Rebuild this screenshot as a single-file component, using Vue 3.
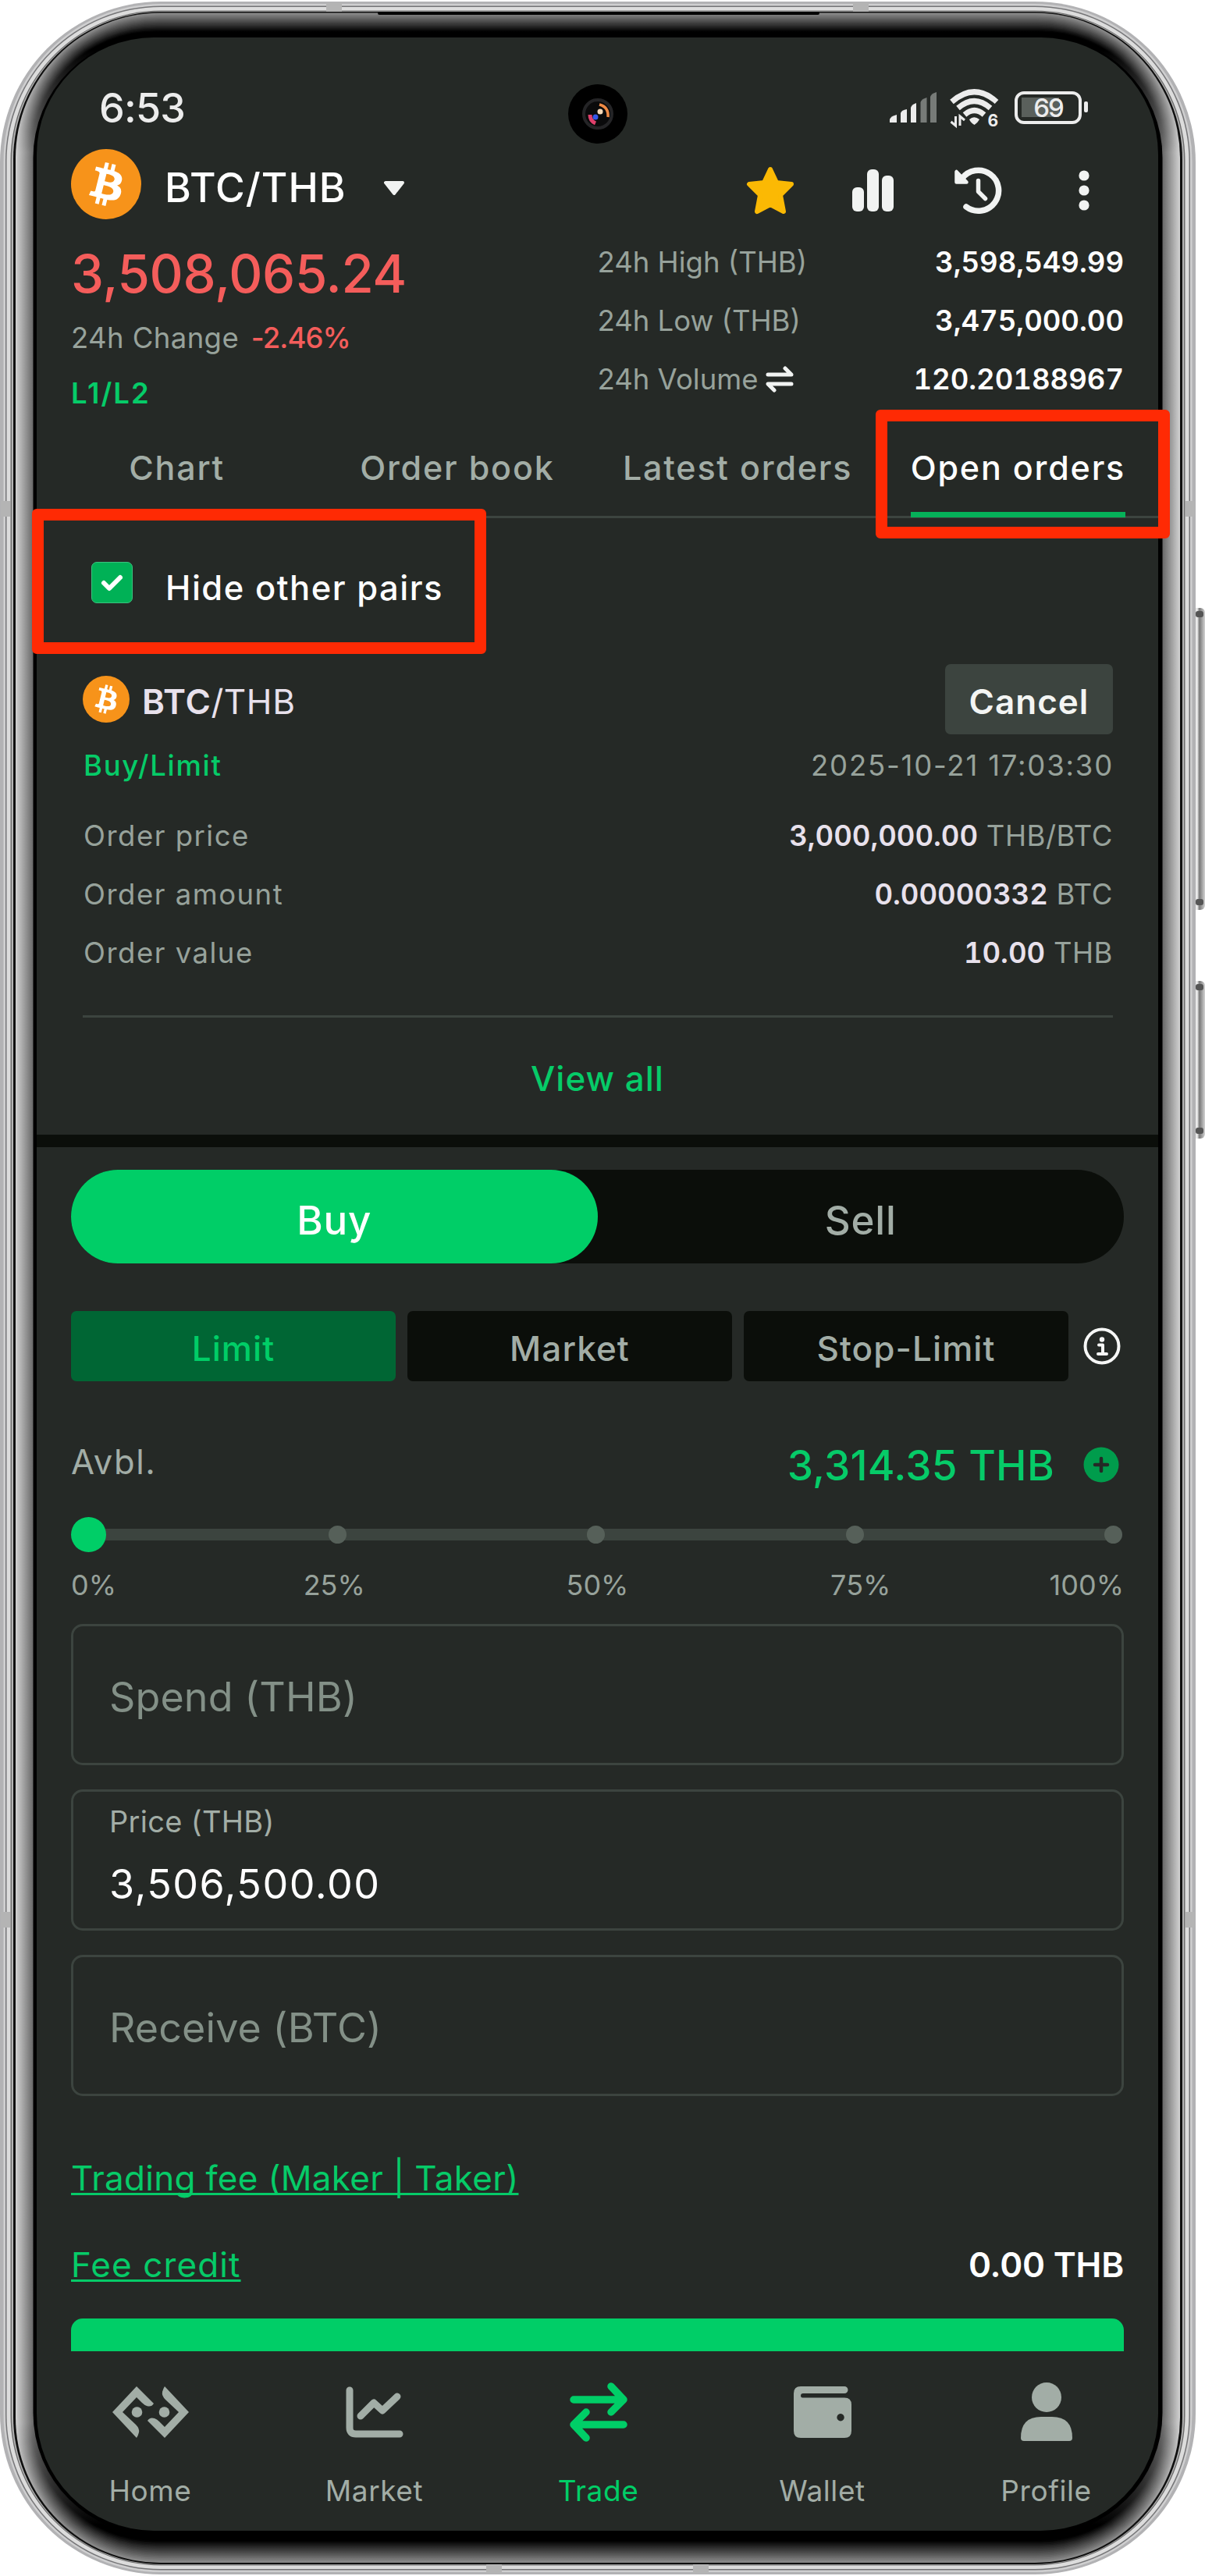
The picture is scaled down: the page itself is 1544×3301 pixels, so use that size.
<template>
    <div class="phone">
        <!-- metal frame, glass edge and side keys -->
        <svg class="frame" width="1544" height="3301" viewBox="0 0 1544 3301">
            <defs>
                <linearGradient v-for="r in glass" :id="r.id" :key="r.id" gradientUnits="userSpaceOnUse" x1="0" y1="16" x2="0" y2="3284">
                    <stop offset="0" :stop-color="r.end" />
                    <stop offset="0.015" :stop-color="r.end" />
                    <stop offset="0.055" :stop-color="r.side" />
                    <stop offset="0.945" :stop-color="r.side" />
                    <stop offset="0.985" :stop-color="r.end" />
                    <stop offset="1" :stop-color="r.end" />
                </linearGradient>
                <linearGradient id="key" x1="0" y1="0" x2="1" y2="0">
                    <stop offset="0" stop-color="#d6d6d6" />
                    <stop offset="0.45" stop-color="#ececec" />
                    <stop offset="0.6" stop-color="#777" />
                    <stop offset="1" stop-color="#d2d2d2" />
                </linearGradient>
            </defs>
            <g v-for="k in keys" :key="k.y">
                <rect x="1526" :y="k.y" width="18" :height="k.h" rx="6" fill="url(#key)" />
                <rect x="1532" :y="k.y + 4" width="10" height="8" rx="3" fill="#555" />
                <rect x="1532" :y="k.y + k.h - 14" width="10" height="8" rx="3" fill="#555" />
            </g>
            <rect
                v-for="m in metal" :key="m.x"
                :x="m.x" :y="m.y" :width="1532 - m.x * 2" :height="3301 - m.y * 2" :rx="206 - m.x" :fill="m.fill"
            />
            <rect
                v-for="r in glass" :key="'g' + r.id"
                :x="r.x" :y="r.top" :width="1532 - r.x * 2" :height="r.bottom - r.top" :rx="r.radius" :fill="`url(#${r.id})`"
            />
            <rect x="42.5" y="46" width="1447" height="3202" rx="156" fill="#000" />
            <rect x="484" y="15" width="566" height="4" rx="2" fill="#050505" />
            <g fill="#b4b4b4">
                <rect x="418" y="3" width="20" height="12" />
                <rect x="1093" y="3" width="20" height="12" />
                <rect x="623" y="3286" width="20" height="12" />
                <rect x="888" y="3286" width="20" height="12" />
                <rect x="1" y="642" width="12" height="20" />
                <rect x="1519" y="642" width="12" height="20" />
                <rect x="1" y="2450" width="12" height="20" />
                <rect x="1519" y="2450" width="12" height="20" />
            </g>
        </svg>

        <div class="screen">
            <div class="status">
                <span class="time">6:53</span>
                <div class="status-icons">
                    <svg width="144" height="64" viewBox="1140 106 144 64">
                        <g fill="#ececec">
                            <path d="M1140 157v-4q1-4 9-6v10z" />
                            <path d="M1154 157v-12q1-4 8-5v17z" />
                            <path d="M1167 157v-19q1-4 7-6v25z" />
                        </g>
                        <g fill="#777b78">
                            <path d="M1179.500 157v-26q1-4 8-6v32z" />
                            <path d="M1192 157v-33q1-4 8-6v39z" />
                        </g>
                        <g fill="none" stroke="#ececec" stroke-width="7">
                            <path d="M1219.500 130.500Q1248.500 105 1277 130.500" />
                            <path d="M1227.500 138.500Q1248.500 120.500 1269 138.500" />
                            <path d="M1236 147Q1248.500 136 1261 147" />
                        </g>
                        <path d="M1242 153q6-5.500 13 0q-2 4-6.500 7q-5-3-6.500-7z" fill="#ececec" />
                        <path d="M1224.500 149v12l-6-5M1230 161v-12l6 5" fill="none" stroke="#ececec" stroke-width="3" />
                        <text x="1265.500" y="161.500" class="wifi-gen">6</text>
                    </svg>
                    <div class="battery"><span>69</span></div>
                </div>
            </div>

            <header class="head">
                <svg class="coin" width="90" height="90" viewBox="0 0 32 32">
                    <circle cx="16" cy="16" r="16" fill="#f7931a" />
                    <path :d="btc" fill="#fff" />
                </svg>
                <h1>BTC/THB</h1>
                <svg class="caret" width="28" height="18" viewBox="0 0 28 18">
                    <path d="M3 2h22L14 16z" fill="#f1f3f2" stroke="#f1f3f2" stroke-width="4" stroke-linejoin="round" />
                </svg>
                <div class="actions">
                    <svg width="62" height="62" viewBox="0 0 62 62">
                        <path d="M31 4L39 21L58 23L44 37L48 58L31 49L14 58L18 37L4 23L23 21Z" fill="#fbb904" stroke="#fbb904" stroke-width="6" stroke-linejoin="round" />
                    </svg>
                    <svg width="53" height="54" viewBox="0 0 53 54" fill="#f1f3f2">
                        <rect y="23" width="15" height="31" rx="6" />
                        <rect x="19" width="15" height="54" rx="6" />
                        <rect x="38" y="8" width="15" height="46" rx="6" />
                    </svg>
                    <svg width="62" height="62" viewBox="0 0 62 62" fill="none" stroke="#f1f3f2" stroke-linecap="round">
                        <path d="M9.500 16A26 26 0 1 1 15 52" stroke-width="7.500" />
                        <path d="M2.500 7v13.500h13z" fill="#f1f3f2" stroke-width="4.500" stroke-linejoin="round" />
                        <path d="M30.500 18.500v14l9 9" stroke-width="5.500" stroke-linejoin="round" />
                    </svg>
                    <svg width="14" height="52" viewBox="0 0 14 52" fill="#f1f3f2">
                        <circle cx="7" cy="7" r="6.600" />
                        <circle cx="7" cy="26" r="6.600" />
                        <circle cx="7" cy="45" r="6.600" />
                    </svg>
                </div>
            </header>

            <section class="quote">
                <div>
                    <div class="last">3,508,065.24</div>
                    <div class="change">24h Change <b>-2.46%</b></div>
                    <div class="level">L1/L2</div>
                </div>
                <dl class="stats">
                    <div v-for="s in stats" :key="s.label">
                        <dt>
                            {{ s.label }}
                            <svg v-if="s.swap" width="36" height="34" viewBox="0 0 36 34" fill="none" stroke="#f1f3f2" stroke-width="5" stroke-linecap="round" stroke-linejoin="round">
                                <path d="M3 11h30l-8-8M33 23H3l8 8" />
                            </svg>
                        </dt>
                        <dd>{{ s.value }}</dd>
                    </div>
                </dl>
            </section>

            <nav class="tabs">
                <a v-for="t in tabs" :key="t" :class="{ active: t === tab }" @click="tab = t"><span>{{ t }}</span></a>
            </nav>

            <label class="hide-pairs" @click="hideOthers = !hideOthers">
                <span class="check">
                    <svg v-if="hideOthers" width="32" height="24" viewBox="0 0 32 24">
                        <path d="M5 12l7 7L26 5" fill="none" stroke="#fff" stroke-width="6" stroke-linecap="round" stroke-linejoin="round" />
                    </svg>
                </span>
                <span class="hide-text">Hide other pairs</span>
            </label>

            <section class="order">
                <div class="order-head">
                    <svg width="60" height="60" viewBox="0 0 32 32">
                        <circle cx="16" cy="16" r="16" fill="#f7931a" />
                        <path :d="btc" fill="#fff" />
                    </svg>
                    <span class="pair"><b>BTC</b>/THB</span>
                    <button class="cancel">Cancel</button>
                </div>
                <div class="order-type">
                    <span class="side">Buy/Limit</span>
                    <span class="date">2025-10-21 17:03:30</span>
                </div>
                <div class="order-rows">
                    <div v-for="r in rows" :key="r.label">
                        <span class="key">{{ r.label }}</span>
                        <span class="val"><b>{{ r.value }}</b> {{ r.unit }}</span>
                    </div>
                </div>
            </section>
            <a class="view-all">View all</a>

            <section class="trade">
                <div class="sides">
                    <button class="buy">Buy</button>
                    <button>Sell</button>
                </div>
                <div class="types">
                    <button v-for="t in types" :key="t" :class="{ active: t === type }" @click="type = t">{{ t }}</button>
                    <svg width="48" height="48" viewBox="0 0 48 48" fill="none" stroke="#f6f7f6">
                        <circle cx="24" cy="24" r="21.500" stroke-width="4" />
                        <circle cx="24" cy="15.500" r="3.200" fill="#f6f7f6" stroke="none" />
                        <path d="M20 22.500h5v11M19 34h11" stroke-width="4" stroke-linecap="round" stroke-linejoin="round" />
                    </svg>
                </div>
                <div class="avbl">
                    <span class="avbl-label">Avbl.</span>
                    <span class="funds">3,314.35 THB</span>
                    <svg width="46" height="46" viewBox="0 0 46 46">
                        <circle cx="23" cy="23" r="22.500" fill="#009c4c" />
                        <path d="M23 15v16M15 23h16" stroke="#252926" stroke-width="4.500" stroke-linecap="round" />
                    </svg>
                </div>
                <div class="slider">
                    <i class="thumb"></i>
                    <i class="dot" v-for="n in 4" :key="n"></i>
                </div>
                <div class="ticks">
                    <span v-for="p in ['0%', '25%', '50%', '75%', '100%']" :key="p">{{ p }}</span>
                </div>
                <div class="field">Spend (THB)</div>
                <div class="field filled">
                    <small>Price (THB)</small>
                    <span>3,506,500.00</span>
                </div>
                <div class="field">Receive (BTC)</div>
                <div class="fee first"><a>Trading fee (Maker | Taker)</a></div>
                <div class="fee"><a>Fee credit</a><b>0.00 THB</b></div>
                <div class="submit"></div>
            </section>

            <nav class="bottom">
                <a>
                    <svg width="98" height="66" viewBox="0 0 98 66" fill="#a2ada6">
                        <path :d="hook" />
                        <path :d="hook" transform="rotate(180 49 33)" />
                        <circle cx="31.500" cy="33" r="6.800" />
                        <circle cx="66.500" cy="33" r="6.800" />
                    </svg>
                    <span>Home</span>
                </a>
                <a>
                    <svg width="74" height="66" viewBox="0 0 74 66" fill="none" stroke="#a2ada6" stroke-width="9" stroke-linecap="round" stroke-linejoin="round">
                        <path d="M5 5v48q0 8 8 8h56" />
                        <path d="M19 38l17-17 11 10 19-18" />
                    </svg>
                    <span>Market</span>
                </a>
                <a class="active">
                    <svg width="74" height="76" viewBox="0 0 74 76" fill="none" stroke="#00ce67" stroke-width="9.500" stroke-linecap="round" stroke-linejoin="round">
                        <path d="M5 22h63M53 5l16 17-16 16" />
                        <path d="M69 54H6M21 38L5 54l16 17" />
                    </svg>
                    <span>Trade</span>
                </a>
                <a>
                    <svg width="74" height="66" viewBox="0 0 74 66" fill="#a2ada6">
                        <path fill-rule="evenodd" d="M9 0h56a4.500 4.500 0 0 1 0 9H12q-3 0-3 3t3 2.500h53q9 0 9 9V57q0 9-9 9H9q-9 0-9-9V9q0-9 9-9zM60 35a4.700 4.700 0 1 0 .1 0z" />
                    </svg>
                    <span>Wallet</span>
                </a>
                <a>
                    <svg width="66" height="76" viewBox="0 0 66 76" fill="#a2ada6">
                        <circle cx="33" cy="19" r="19" />
                        <path d="M0 71q0-27 26-27h14q26 0 26 27 0 4-4 4H4q-4 0-4-4z" />
                    </svg>
                    <span>Profile</span>
                </a>
            </nav>
        </div>

        <!-- front camera -->
        <svg class="camera" width="76" height="76" viewBox="0 0 76 76">
            <circle cx="38" cy="38" r="38" fill="#000" />
            <circle cx="38" cy="38" r="18" fill="#0a0a0b" stroke="#242426" stroke-width="4" />
            <path d="M40 26q12 3 11 16" fill="none" stroke="#ef8a45" stroke-width="3.500" />
            <path d="M28 39q0 8 7 11" fill="none" stroke="#e0406c" stroke-width="5" />
            <circle cx="35" cy="42" r="3.500" fill="#3557e8" />
            <circle cx="41" cy="35" r="3.500" fill="#f6d8b8" />
        </svg>

        <div class="mark mark-tab"></div>
        <div class="mark mark-hide"></div>
    </div>
</template>

<script setup>
    import { ref } from 'vue'

    const tabs = ['Chart', 'Order book', 'Latest orders', 'Open orders']
    const tab = ref('Open orders')
    const hideOthers = ref(true)

    const types = ['Limit', 'Market', 'Stop-Limit']
    const type = ref('Limit')

    const stats = [
        { label: '24h High (THB)', value: '3,598,549.99' },
        { label: '24h Low (THB)', value: '3,475,000.00' },
        { label: '24h Volume', value: '120.20188967', swap: true }
    ]

    const rows = [
        { label: 'Order price', value: '3,000,000.00', unit: 'THB/BTC' },
        { label: 'Order amount', value: '0.00000332', unit: 'BTC' },
        { label: 'Order value', value: '10.00', unit: 'THB' }
    ]

    /* ------- ICON SHAPES USED MORE THAN ONCE --------------------------*/

    const btc = 'M23.189 14.02c.314-2.096-1.283-3.223-3.465-3.975l.708-2.84-1.728-.43-.69 2.765c-.454-.114-.92-.22-1.385-.326l.695-2.783L15.596 6l-.708 2.839c-.376-.086-.746-.17-1.104-.26l.002-.009-2.384-.595-.46 1.846s1.283.294 1.256.312c.7.175.826.638.805 1.006l-.806 3.235c.048.012.11.03.18.057l-.183-.045-1.13 4.532c-.086.212-.303.531-.793.41.018.025-1.256-.313-1.256-.313l-.858 1.978 2.25.561c.418.105.828.215 1.231.318l-.715 2.872 1.727.43.708-2.84c.472.127.93.245 1.378.357l-.706 2.828 1.728.43.715-2.866c2.948.558 5.164.333 6.097-2.333.752-2.146-.037-3.385-1.588-4.192 1.13-.26 1.98-1.003 2.207-2.538zm-3.95 5.538c-.533 2.147-4.148.986-5.32.695l.95-3.805c1.172.293 4.929.872 4.37 3.11zm.535-5.569c-.487 1.953-3.495.96-4.47.717l.86-3.45c.975.243 4.118.696 3.61 2.733z'
    const hook = 'M31 0L53 22Q50 27 44 25Q41 24 38 21L31 14L13 33L30 49Q35 54 34 59Q33 63 31 66L0 33Z'

    /* ------- PHONE BODY -----------------------------------------------*/

    const keys = [{ y: 779, h: 387 }, { y: 1257, h: 202 }]

    const metal = [
        { x: 0, y: 2, fill: '#b2b2b4' },
        { x: 4.5, y: 5, fill: '#cfcfd0' },
        { x: 7, y: 7.5, fill: '#757577' },
        { x: 8.5, y: 9, fill: '#dcdcdc' },
        { x: 13.5, y: 13.5, fill: '#6c6c6c' },
        { x: 15, y: 14.5, fill: '#b5b5b5' },
        { x: 17, y: 15, fill: '#101010' }
    ]

    function grey(from, to, t) {
        const v = Math.round(from + (to - from) * t)
        return `rgb(${v}, ${v}, ${v})`
    }

    // the glass edge fades from its rim towards the display
    const glass = Array.from({ length: 24 }, (_, i) => {
        const t = i / 23
        return {
            id: 'ring' + i,
            x: 20 + 22 * t,
            top: 16.5 + 29 * t,
            bottom: 3284 - 34 * t,
            radius: 186 - 30 * t,
            side: grey(208, 104, t),
            end: grey(138, 0, Math.min(1, t * 1.25))
        }
    })
</script>

<style>
body {
    margin: 0;
    background: #fff;
}
</style>

<style scoped>
.phone {
    position: relative;
    width: 1544px;
    height: 3301px;
    overflow: hidden;
    padding: 48px 60px 0 47px;
    box-sizing: border-box;
    font-family: Inter, "Liberation Sans", sans-serif;
    color: #fff;
}

.frame {
    position: absolute;
    left: 0;
    top: 0;
}

.camera {
    position: absolute;
    left: 728px;
    top: 108px;
}

.screen {
    position: relative;
    display: flex;
    flex-direction: column;
    width: 1437px;
    height: 3195px;
    border-radius: 150px;
    background: #252926;
    overflow: hidden;
}

button {
    border: 0;
    font: inherit;
    color: inherit;
    background: none;
    letter-spacing: inherit;
}

b {
    font-weight: 600;
}

/* STATUS BAR */

.status {
    display: flex;
    justify-content: space-between;
    align-items: center;
    height: 143px;
    padding: 37px 90px 0 80px;
    box-sizing: border-box;
    color: #ececec;
}

.time {
    font-size: 52px;
    font-weight: 500;
    letter-spacing: -0.8px;
}

.status-icons {
    display: flex;
    align-items: center;
    gap: 16px;
}

.wifi-gen {
    font-size: 21px;
    font-weight: 700;
    fill: #ececec;
}

.battery {
    position: relative;
    width: 86px;
    height: 42px;
    margin-right: 8px;
    box-sizing: border-box;
    border: 4.5px solid #ececec;
    border-radius: 12px;
    font-size: 33px;
    font-weight: 500;
    line-height: 34px;
    text-align: center;
    letter-spacing: -2px;
    background: linear-gradient(#5a605c, #5a605c) 5px 4px / 48px 25px no-repeat;
}

.battery::after {
    content: "";
    position: absolute;
    right: -12px;
    top: 9px;
    width: 5px;
    height: 14px;
    border-radius: 2px;
    background: #ececec;
}

/* HEADER */

.head {
    display: flex;
    align-items: center;
    height: 90px;
    padding: 0 88px 0 44px;
}

h1 {
    margin: 0 0 0 30px;
    padding-top: 8px;
    font-size: 51.5px;
    font-weight: 500;
    line-height: 82px;
    letter-spacing: 1px;
}

.caret {
    margin: 9px 0 0 47px;
}

.actions {
    display: flex;
    align-items: center;
    margin: 15px 0 0 auto;
}

.actions svg:nth-child(2) {
    margin: 0 78px 0 74px;
}

.actions svg:nth-child(4) {
    margin-left: 97px;
}

.quote {
    display: flex;
    justify-content: space-between;
    height: 259px;
    padding: 0 44px;
    font-size: 36.5px;
    box-sizing: border-box;
}

.last {
    margin-top: 30px;
    font-size: 67px;
    font-weight: 500;
    line-height: 80px;
    letter-spacing: -0.3px;
    color: #f45d5b;
}

.change {
    margin-top: 12px;
    line-height: 60px;
    letter-spacing: 0.4px;
    color: #97a29b;
}

.change b {
    margin-left: 5px;
    font-weight: 500;
    letter-spacing: -0.9px;
    color: #f45d5b;
}

.level {
    margin-top: 11px;
    font-weight: 600;
    line-height: 60px;
    letter-spacing: 2px;
    color: #06cb68;
}

.stats {
    width: 674.5px;
    margin: 17.5px 0 0;
    line-height: 75px;
}

.stats > div {
    display: flex;
    justify-content: space-between;
}

.stats dt {
    display: flex;
    align-items: center;
    gap: 9px;
    color: #97a29b;
}

.stats dd {
    margin: 0;
    font-weight: 600;
    font-variant-numeric: tabular-nums;
}

/* TABS */

.tabs {
    display: flex;
    height: 123.5px;
    box-sizing: border-box;
    border-bottom: 3px solid #3c443f;
    font-size: 43px;
    font-weight: 500;
    line-height: 118px;
    letter-spacing: 1.8px;
    color: #a2ada6;
}

.tabs a {
    flex: 1;
    text-align: center;
    white-space: nowrap;
}

.tabs span {
    display: inline-block;
    height: 123px;
    box-sizing: border-box;
}

.tabs .active {
    color: #fff;
}

.tabs .active span {
    background: linear-gradient(#06b159, #06b159) 0 100% / 100% 7px no-repeat;
}

/* OPEN ORDER */

.hide-pairs {
    display: flex;
    align-items: center;
    gap: 42px;
    height: 166px;
    padding-left: 70px;
    font-size: 43.5px;
    font-weight: 500;
    letter-spacing: 1.5px;
}

.check {
    display: flex;
    align-items: center;
    justify-content: center;
    width: 53px;
    height: 53px;
    border-radius: 7px;
    border: 1px solid #3cc27f;
    box-sizing: border-box;
    background: #00b156;
}

.hide-text {
    padding-top: 13px;
}

.order {
    margin: 21.5px 58px 0 59px;
    padding-bottom: 42px;
    border-bottom: 3px solid #3c443f;
    font-size: 36.5px;
    color: #97a29b;
}

.order-head {
    display: flex;
    align-items: center;
    height: 90px;
}

.pair {
    margin-left: 16px;
    padding-top: 6px;
    font-size: 44px;
    letter-spacing: 0.6px;
    color: #e8e1ec;
}

.cancel {
    width: 215px;
    height: 90px;
    margin-left: auto;
    padding: 6px 0 0;
    border-radius: 7px;
    background: #3c443f;
    color: #f3f5f3;
    font-size: 44px;
    font-weight: 600;
    letter-spacing: 1px;
}

.order-type {
    display: flex;
    justify-content: space-between;
    padding-left: 1px;
    line-height: 80px;
}

.side {
    font-weight: 500;
    letter-spacing: 1.7px;
    color: #06cb68;
}

.date {
    margin-right: -1px;
    letter-spacing: 1.8px;
}

.order-rows {
    margin-top: 13px;
    line-height: 75px;
}

.order-rows div {
    display: flex;
    justify-content: space-between;
}

.order-rows b {
    color: #e8e1ec;
    letter-spacing: 0;
    font-variant-numeric: tabular-nums;
}

.key {
    padding-left: 1px;
    letter-spacing: 1.5px;
}

.val {
    letter-spacing: 0.5px;
}

.view-all {
    height: 150px;
    box-sizing: border-box;
    padding-top: 7px;
    border-bottom: 0;
    font-size: 44px;
    font-weight: 500;
    line-height: 143px;
    letter-spacing: 1px;
    text-align: center;
    color: #06cb68;
}

/* TRADE FORM */

.trade {
    padding: 29px 44px 0;
    border-top: 16px solid #0b0e0a;
    height: 1558px;
    box-sizing: border-box;
}

.sides {
    display: flex;
    height: 120px;
    border-radius: 60px;
    background: #0b0e0a;
    font-size: 51px;
    font-weight: 500;
    letter-spacing: 0.8px;
    color: #a2ada6;
}

.sides button {
    flex: 1;
    padding: 8px 0 0;
    border-radius: 60px;
}

.sides .buy {
    background: #00ce67;
    color: #fff;
}

.types {
    display: flex;
    align-items: center;
    gap: 15px;
    margin-top: 60.5px;
    height: 90px;
    font-size: 44px;
    font-weight: 500;
    letter-spacing: 1.1px;
    color: #a2ada6;
}

.types button {
    width: 416px;
    height: 90px;
    padding: 6px 0 0;
    border-radius: 7px;
    background: #0b0e0a;
}

.types .active {
    background: #006634;
    color: #00ce67;
}

.types svg {
    margin-left: 4px;
}

.avbl {
    display: flex;
    align-items: center;
    margin-top: 77px;
    height: 60px;
    padding-right: 6px;
}

.avbl-label {
    padding-bottom: 8px;
    font-size: 43.5px;
    letter-spacing: 1.6px;
    color: #a2ada6;
}

.funds {
    margin: 0 37px 0 auto;
    padding-top: 2px;
    font-size: 53px;
    font-weight: 500;
    letter-spacing: 0.3px;
    color: #06cb68;
}

.slider {
    display: flex;
    align-items: center;
    margin-top: 37px;
    height: 45px;
    padding-right: 2px;
    background: linear-gradient(#3c443f, #3c443f) 22px 50% / 1308px 15px no-repeat;
}

.thumb {
    width: 45px;
    height: 45px;
    border-radius: 50%;
    background: #00ce67;
}

.dot {
    width: 23px;
    height: 23px;
    margin-left: 308.5px;
    border-radius: 50%;
    background: #566059;
}

.thumb + .dot {
    margin-left: 285px;
}

.ticks {
    display: flex;
    margin: 12px 0 20px;
    font-size: 36px;
    line-height: 60px;
    color: #97a29b;
}

.ticks span {
    flex: 2;
    text-align: center;
}

.ticks span:first-child {
    flex: 1;
    text-align: left;
}

.ticks span:last-child {
    flex: 1;
    text-align: right;
}

.field {
    height: 181.5px;
    margin-bottom: 30.5px;
    padding: 6px 0 0 46px;
    box-sizing: border-box;
    border: 3.5px solid #3c443f;
    border-radius: 15px;
    font-size: 52px;
    line-height: 169px;
    letter-spacing: 0.1px;
    color: #839087;
}

.filled {
    padding-top: 8px;
    line-height: 60px;
    color: #fff;
}

.filled small {
    display: block;
    margin-bottom: 21px;
    font-size: 38px;
    letter-spacing: 0.3px;
    color: #a2ada6;
}

.filled span {
    display: block;
    letter-spacing: 1.5px;
}

.fee {
    display: flex;
    justify-content: space-between;
    margin-top: 51px;
    font-size: 44px;
    line-height: 60px;
}

.fee a {
    letter-spacing: 1.1px;
    color: #06cb68;
    text-decoration: underline;
    text-decoration-thickness: 2.5px;
    text-underline-offset: 3px;
    text-decoration-skip-ink: none;
}

.fee.first {
    margin-top: 75px;
}

.fee.first a {
    letter-spacing: 0.3px;
}

.fee b {
    letter-spacing: -0.2px;
}

.submit {
    height: 41.5px;
    margin-top: 39px;
    border-radius: 15px 15px 0 0;
    background: #00ce67;
}

/* BOTTOM NAVIGATION */

.bottom {
    display: flex;
    padding: 39px 0 0 2px;
    font-size: 37px;
    line-height: 60px;
    letter-spacing: 0.6px;
    color: #a2ada6;
}

.bottom a {
    flex: 1;
    display: flex;
    flex-direction: column;
    align-items: center;
    justify-content: space-between;
    height: 171px;
}

.bottom svg {
    height: 80px;
}

.bottom .active {
    color: #00ce67;
}

/* HIGHLIGHTS DRAWN OVER THE SCREEN */

.mark {
    position: absolute;
    box-sizing: border-box;
    border: 15px solid #ff2a04;
    border-radius: 6px;
}

.mark-tab {
    left: 1122px;
    top: 525px;
    width: 377px;
    height: 165px;
}

.mark-hide {
    left: 41px;
    top: 652px;
    width: 582px;
    height: 186px;
}
</style>
